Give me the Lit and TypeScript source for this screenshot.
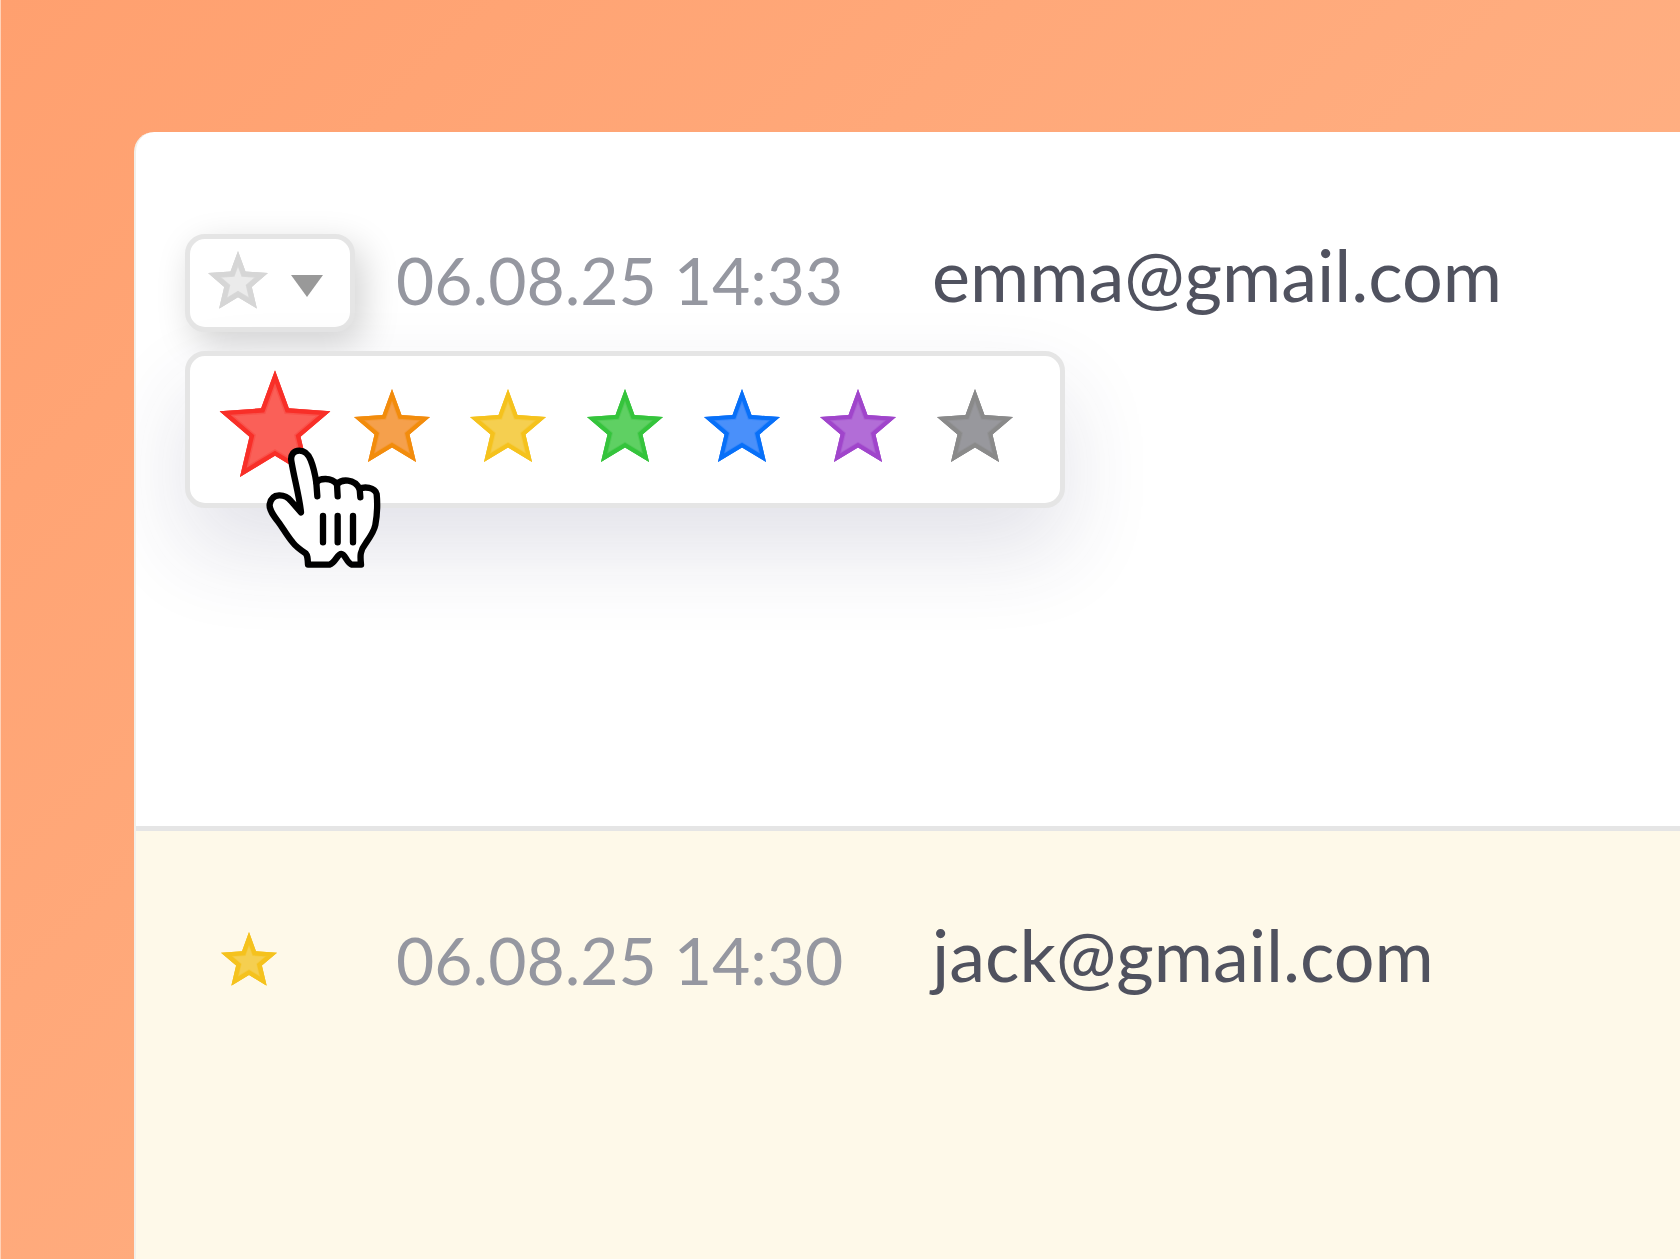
import { LitElement, html, svg, css } from "lit";
import { customElement, property, state } from "lit/decorators.js";

const STAR =
  "38,0 47.5,26 76,28 55.5,45.5 62,73 38,58.5 14,73 20.5,45.5 0,28 28.5,26";

interface Shade {
  name: string;
  edge: string;
  mid: string;
  fill: string;
}

const NONE: Shade = { name: "None", edge: "#d6d6d6", mid: "#d9d9d9", fill: "#ebebeb" };
const YELLOW: Shade = { name: "Yellow", edge: "#f5c21d", mid: "#f5cb40", fill: "#f5cf50" };

const SHADES: Shade[] = [
  { name: "Red", edge: "#f82f28", mid: "#f9524b", fill: "#fa6058" },
  { name: "Orange", edge: "#f28c0c", mid: "#f49a3c", fill: "#f5a04c" },
  YELLOW,
  { name: "Green", edge: "#35c43c", mid: "#53cb58", fill: "#5fd063" },
  { name: "Blue", edge: "#0870f8", mid: "#3a88fa", fill: "#4a90fa" },
  { name: "Purple", edge: "#a045cb", mid: "#ac60d3", fill: "#b26dd7" },
  { name: "Gray", edge: "#8a8a8a", mid: "#939396", fill: "#98989d" },
];

@customElement("star-icon")
export class StarIcon extends LitElement {
  @property({ attribute: false }) shade: Shade = NONE;
  @property({ type: Number }) edge = 4;
  @property({ type: Number }) band = 5;

  static styles = css`
    :host {
      display: block;
    }
    .star {
      display: block;
      width: 100%;
      height: auto;
    }
  `;

  render() {
    const { edge, mid, fill } = this.shade;
    return html`<svg class="star" viewBox="0 0 76 73" aria-hidden="true">
      <clipPath id="outline"><polygon points=${STAR}></polygon></clipPath>
      <g clip-path="url(#outline)">
        ${svg`<polygon points=${STAR} fill=${fill} stroke=${mid} stroke-width=${this.band * 2}></polygon>
        <polygon points=${STAR} fill="none" stroke=${edge} stroke-width=${this.edge * 2}></polygon>`}
      </g>
    </svg>`;
  }
}

@customElement("star-picker")
export class StarPicker extends LitElement {
  @state() private active = "Red";

  static styles = css`
    :host {
      display: block;
      position: relative;
    }
    .trigger {
      display: flex;
      align-items: center;
      gap: 23px;
      box-sizing: border-box;
      width: 170px;
      height: 98px;
      margin: 0;
      padding: 0 0 6px 18px;
      border: 5px solid #e5e5e5;
      border-radius: 20px;
      background: #fff;
      box-shadow: 8px 12px 36px rgba(0, 0, 0, 0.18);
      cursor: pointer;
    }
    .current {
      width: 60px;
    }
    .caret {
      display: block;
      width: 32px;
      height: 22px;
      margin-top: 12px;
    }
    .menu {
      position: absolute;
      top: 117px;
      left: 0;
      z-index: 1;
      display: flex;
      align-items: center;
      justify-content: space-between;
      box-sizing: border-box;
      width: 880px;
      height: 157px;
      padding: 0 47px;
      border: 5px solid #e5e5e5;
      border-radius: 20px;
      background: #fff;
      box-shadow: 0 42px 88px rgba(50, 50, 100, 0.14);
    }
    .option {
      width: 76px;
      margin: 0;
      padding: 0 0 8px;
      border: 0;
      background: none;
      cursor: pointer;
    }
    .option.active {
      transform: scale(1.46);
    }
    .pointer {
      position: absolute;
      top: 212px;
      left: 80px;
      z-index: 2;
      width: 117px;
      height: 123px;
      pointer-events: none;
    }
  `;

  render() {
    return html`
      <button class="trigger" aria-label="Star colour" aria-expanded="true">
        <star-icon class="current" .edge=${6} .band=${7}></star-icon>
        <svg class="caret" viewBox="0 0 32 22" aria-hidden="true">
          <path d="M0 0H32L16 22Z" fill="#999"></path>
        </svg>
      </button>
      <div class="menu" role="group" aria-label="Star colours">
        ${SHADES.map(
          (s) => html`<button
            class="option ${s.name === this.active ? "active" : ""}"
            aria-label=${s.name}
            @mouseenter=${() => (this.active = s.name)}
          >
            <star-icon .shade=${s} .edge=${s.name === this.active ? 3 : 4} .band=${s.name === this.active ? 4 : 5}></star-icon>
          </button>`
        )}
      </div>
      <svg class="pointer" viewBox="195 290 351 369" aria-hidden="true">
        <g fill="#fff" stroke="#000" stroke-width="19" stroke-linecap="round" stroke-linejoin="round">
          <path
            d="M303 489 C298 440 282 385 274 335 C271 316 281 304 298 304 C316 304 325 315 332 332 C340 352 345 373 349 400 C358 386 394 383 411 405 C424 389 463 387 479 419 C492 411 524 413 530 434 C533 466 531 500 526 527 C522 547 509 565 497 582 C480 604 480 618 483 646 L456 646 C440 641 436 614 424 614 C411 614 407 640 388 646 L324 646 C323 626 323 619 317 612 C302 602 288 592 278 579 C260 557 248 535 236 519 C222 501 207 482 209 465 C216 428 256 434 273 455 Z"
          ></path>
          <path d="M349 400 L352 441 M411 405 L413 441 M479 419 L481 444" fill="none"></path>
          <path d="M369 500V579 M413 500V579 M459 500V579" fill="none"></path>
        </g>
      </svg>
    `;
  }
}

@customElement("app-root")
export class AppRoot extends LitElement {
  static styles = css`
    :host {
      display: block;
      font-family: Lato, "Liberation Sans", sans-serif;
    }
    .page {
      display: flex;
      box-sizing: border-box;
      min-height: 100vh;
      padding: 132px 0 0 133px;
      border-left: 1px solid #ffd2b8;
      background: linear-gradient(135deg, #ffa06f, #ffb78c);
    }
    .list {
      display: flex;
      flex: 1;
      flex-direction: column;
      margin: 0;
      padding: 0;
      overflow: hidden;
      list-style: none;
      border-left: 2px solid #f2efe8;
      border-radius: 20px 0 0 0;
      background: #fff;
    }
    .row {
      display: grid;
      grid-template-columns: 211px 536px 1fr;
      align-items: start;
      padding-left: 49px;
    }
    .row.open {
      padding-top: 102px;
      padding-bottom: 494px;
      border-bottom: 5px solid #e5e5e5;
    }
    .row.starred {
      flex: 1;
      padding-top: 83px;
      background: #fef9e9;
    }
    .mark {
      width: 56px;
      margin: 18px 0 0 36px;
    }
    .date {
      font-size: 66px;
      line-height: 92px;
      white-space: nowrap;
      color: #9597a0;
    }
    .mail {
      font-size: 72px;
      line-height: 80px;
      white-space: nowrap;
      color: #50525f;
      text-decoration: none;
    }
  `;

  render() {
    return html`
      <main class="page">
        <ul class="list">
          <li class="row open">
            <star-picker></star-picker>
            <time class="date" datetime="2025-08-06T14:33">06.08.25 14:33</time>
            <a class="mail" href="mailto:emma@gmail.com">emma@gmail.com</a>
          </li>
          <li class="row starred">
            <star-icon class="mark" .shade=${YELLOW} .edge=${6} .band=${7}></star-icon>
            <time class="date" datetime="2025-08-06T14:30">06.08.25 14:30</time>
            <a class="mail" href="mailto:jack@gmail.com">jack@gmail.com</a>
          </li>
        </ul>
      </main>
    `;
  }
}
